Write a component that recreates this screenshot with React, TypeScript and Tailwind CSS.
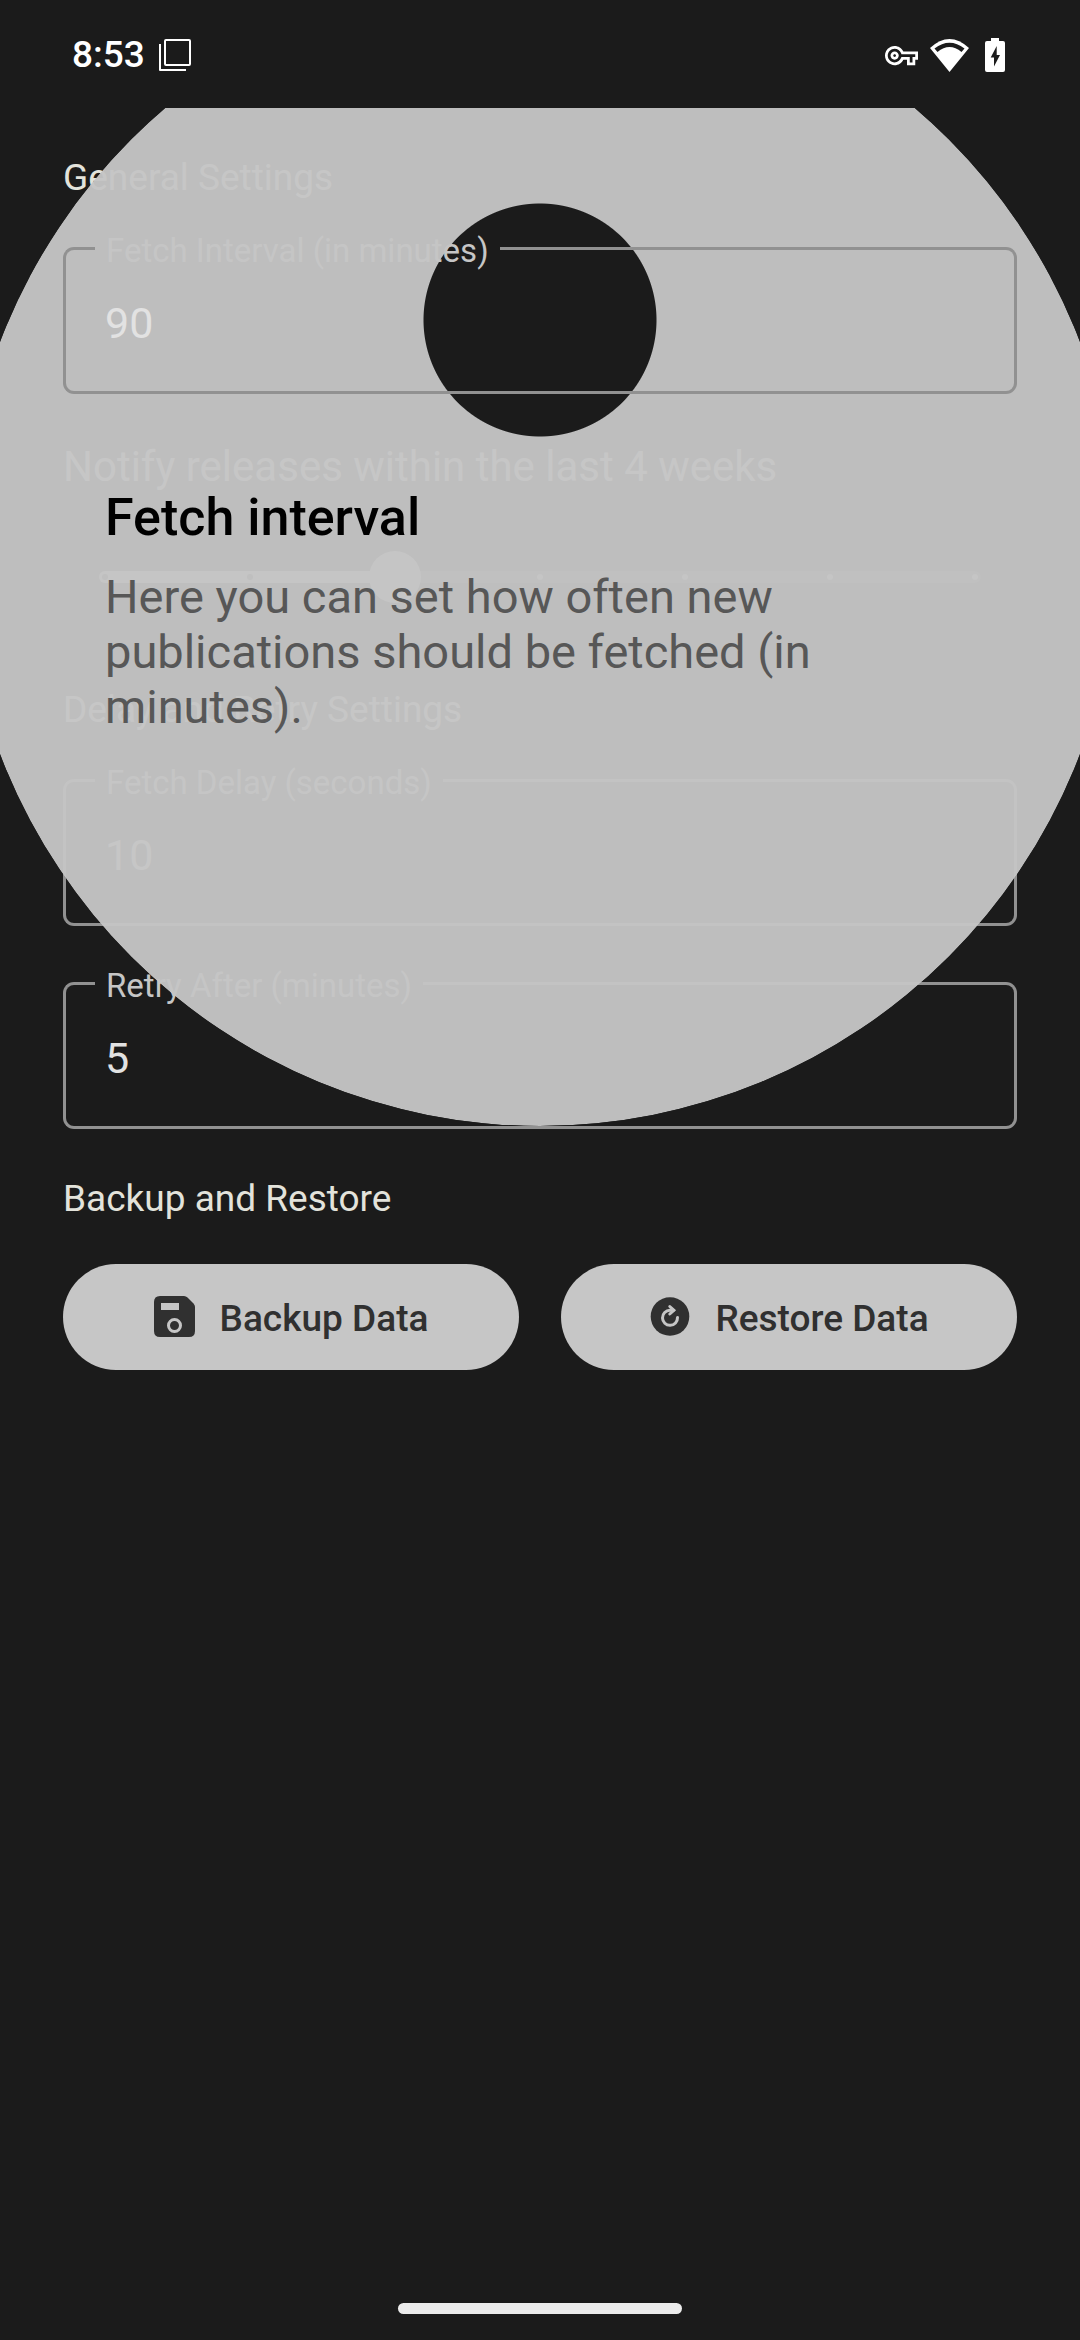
import { useState } from "react";
import { MdOutlineVpnKey } from "react-icons/md";

function StatusBar() {
  return (
    <header className="flex h-[108px] items-center justify-between pt-0.5 pr-[75px] pl-[72px] text-white">
      <div className="flex items-center gap-[14px]">
        <time className="text-[37px] leading-[44px] font-medium">8:53</time>
        <svg className="h-8 w-8" viewBox="0 0 32 32" fill="none" stroke="currentColor" strokeWidth="2" aria-label="Screen capture">
          <rect x="6" y="1" width="25" height="25" rx="1" />
          <path d="M1 5V31H27" strokeLinejoin="round" />
        </svg>
      </div>
      <div className="flex items-center">
        <MdOutlineVpnKey className="h-[33px] w-[33px]" aria-label="VPN" />
        <svg className="ml-3 h-[33px] w-[39px]" viewBox="0 0 39 33" aria-label="Wi-Fi">
          <path d="M19.5 33L0 9Q19.5 -9 39 9Z" fill="currentColor" />
          <path d="M4.5 9.5Q19.5 -2 34.5 9.5L31.5 13Q19.5 3 7.5 13Z" fill="#1b1b1b" />
        </svg>
        <svg className="ml-4 h-[34px] w-5" viewBox="0 0 20 34" aria-label="Battery charging">
          <path d="M6 0H14V3H18Q20 3 20 5V32Q20 34 18 34H2Q0 34 0 32V5Q0 3 2 3H6Z" fill="currentColor" />
          <path d="M11.7 8L5.7 19.5H9V28.5L15 17H11.7Z" fill="#1b1b1b" />
        </svg>
      </div>
    </header>
  );
}

function SectionTitle({ children }: { children: string }) {
  return <h2 className="text-[37px] leading-[52px] text-[#e3e3db]">{children}</h2>;
}

type FieldProps = { id: string; label: string; initial: string; raised?: boolean };

/* Outlined text field; `raised` lifts the outline and value above the spotlight. */
function OutlinedField({ id, label, initial, raised = false }: FieldProps) {
  const [value, setValue] = useState(initial);
  const layer = raised ? "relative z-20" : "relative";
  return (
    <div className="relative">
      <div className="absolute inset-0 flex">
        <span className={`${layer} w-8 rounded-l-[11px] border-y-[3px] border-l-[3px] border-[#919191]`} />
        <span className="flex flex-col justify-between">
          <label htmlFor={id} className="-mt-4 px-[11px] text-[33px] leading-[40px] whitespace-nowrap text-[#c6c6c6]">
            {label}
          </label>
          <span className={`${layer} h-[3px] bg-[#919191]`} />
        </span>
        <span className={`${layer} flex-1 rounded-r-[11px] border-y-[3px] border-r-[3px] border-[#919191]`} />
      </div>
      <input
        id={id}
        inputMode="numeric"
        value={value}
        onChange={(e) => setValue(e.target.value)}
        className={`${layer} block h-[147px] w-full bg-transparent px-[42px] pt-1 text-[43px] text-[#e2e2e2] outline-none`}
      />
    </div>
  );
}

const STEPS = [0, 2, 4, 6, 8, 10, 12];

function WeeksSlider({ value, onChange }: { value: number; onChange: (n: number) => void }) {
  const percent = `${(value / 12) * 100}%`;
  return (
    <div className="relative mx-9 flex h-[126px] items-center">
      <div className="relative flex h-3 w-full items-center justify-between rounded-full bg-[#474747] px-[3px]">
        <span className="absolute inset-y-0 left-0 rounded-full bg-[#c6c6c6]" style={{ width: percent }} />
        {STEPS.map((s) => (
          <span key={s} className={`relative h-1.5 w-1.5 rounded-full ${s < value ? "bg-[#303030]" : "bg-[#c6c6c6]"}`} />
        ))}
        <div className="absolute inset-x-1.5 inset-y-0">
          <span
            className="absolute top-1/2 h-[52px] w-[52px] -translate-x-1/2 -translate-y-1/2 rounded-full bg-[#c6c6c6]"
            style={{ left: percent }}
          />
        </div>
      </div>
      <input
        type="range"
        aria-labelledby="weeks-label"
        min={0}
        max={12}
        step={2}
        value={value}
        onChange={(e) => onChange(Number(e.target.value))}
        className="absolute inset-0 h-full w-full opacity-0"
      />
    </div>
  );
}

function SaveIcon() {
  return (
    <svg className="h-[42px] w-[42px]" viewBox="0 0 42 42" aria-hidden="true">
      <path d="M6 0H30Q32 0 33.500 1.500L39.500 7.500Q41 9 41 11V35Q41 41 35 41H6Q0 41 0 35V6Q0 0 6 0Z" fill="#303030" />
      <rect x="7" y="7" width="18" height="7" fill="#c6c6c6" />
      <circle cx="20.5" cy="29.500" r="6" fill="none" stroke="#c6c6c6" strokeWidth="3" />
    </svg>
  );
}

function RestoreIcon() {
  return (
    <svg className="h-[42px] w-[42px]" viewBox="0 0 42 42" aria-hidden="true">
      <circle cx="21" cy="20.5" r="19.3" fill="#303030" />
      <g fill="none" stroke="#c6c6c6" strokeWidth="3" strokeLinecap="round">
        <path d="M28.500 21.500A7.500 7.500 0 1 1 21 14.300H24.500" />
        <path d="M20.800 10.500L24.900 14.300L20.800 18" />
      </g>
    </svg>
  );
}

function PillButton({ icon, children }: { icon: React.ReactNode; children: string }) {
  return (
    <button
      type="button"
      className="flex h-[106px] flex-1 items-center justify-center gap-6 rounded-full bg-[#c6c6c6] text-[37px] leading-[52px] font-medium text-[#303030]"
    >
      {icon}
      <span className="pt-[3px]">{children}</span>
    </button>
  );
}

/* Spotlight disc with a round cut-out over the highlighted field. */
function Spotlight() {
  return (
    <div role="dialog" aria-labelledby="tip-title" className="pointer-events-none absolute inset-0 z-10 overflow-hidden">
      <div className="absolute -top-[138px] left-1/2 h-[1156px] w-[1156px] -translate-x-1/2 rounded-full bg-[#c5c5c5]/96 [mask:radial-gradient(circle_at_578px_350px,transparent_116px,black_117px)]" />
      <div className="relative px-[105px] pt-[379px]">
        <h1 id="tip-title" className="text-[52px] leading-[62px] font-medium text-black">
          Fetch interval
        </h1>
        <p className="mt-5 text-[47px] leading-[55px] text-[#575757]">
          Here you can set how often new publications should be fetched (in minutes).
        </p>
      </div>
    </div>
  );
}

export default function App() {
  const [weeks, setWeeks] = useState(4);
  return (
    <div className="flex min-h-screen flex-col bg-[#1b1b1b] font-['Roboto',sans-serif]">
      <StatusBar />
      <main className="relative flex-1 px-[63px] pt-11">
        <SectionTitle>General Settings</SectionTitle>
        <div className="mt-[43px]">
          <OutlinedField id="fetch-interval" label="Fetch Interval (in minutes)" initial="90" raised />
        </div>
        <p id="weeks-label" className="mt-[42px] text-[42px] leading-[62px] text-[#e2e2e2]">
          {`Notify releases within the last ${weeks} weeks`}
        </p>
        <div className="mt-4 mb-11">
          <WeeksSlider value={weeks} onChange={setWeeks} />
        </div>
        <SectionTitle>Delay and Retry Settings</SectionTitle>
        <div className="mt-[43px] mb-11 flex flex-col gap-14">
          <OutlinedField id="fetch-delay" label="Fetch Delay (seconds)" initial="10" />
          <OutlinedField id="retry-after" label="Retry After (minutes)" initial="5" />
        </div>
        <SectionTitle>Backup and Restore</SectionTitle>
        <div className="mt-[39px] flex gap-[42px]">
          <PillButton icon={<SaveIcon />}>Backup Data</PillButton>
          <PillButton icon={<RestoreIcon />}>Restore Data</PillButton>
        </div>
        <Spotlight />
      </main>
      <footer className="flex justify-center pb-[26px]">
        <div className="h-[11px] w-[284px] rounded-full bg-[#ececec]" />
      </footer>
    </div>
  );
}
